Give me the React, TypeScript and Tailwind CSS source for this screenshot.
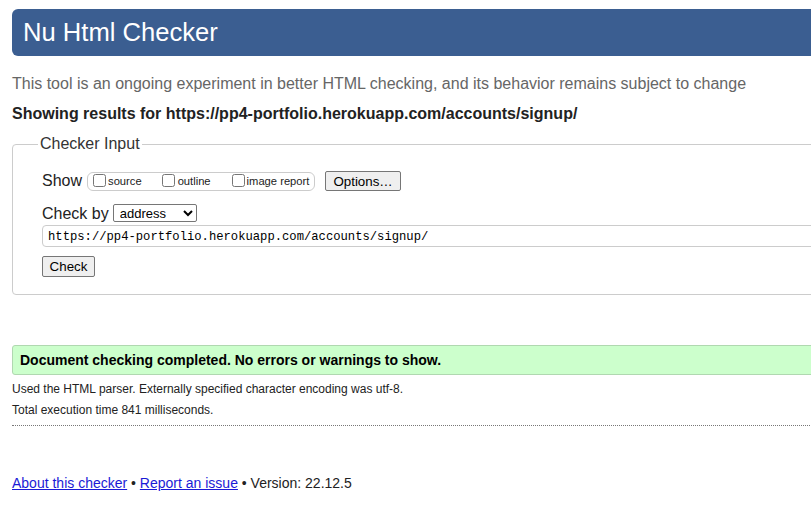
import React from "react";

const App = () => {
  return (
    <div className="w-[811px] h-[514px] overflow-hidden bg-white font-['Liberation_Sans',Arial,sans-serif] text-[#222]">
      <div className="w-[900px] pl-3 pt-[9px]">
        <h1 className="h-[47px] flex items-center pl-[11px] bg-[#3b5e91] text-white text-[25.6px] rounded-l-[6px]">
          Nu Html Checker
        </h1>

        <p className="mt-[19px] text-base leading-[18px] text-[#666]">
          This tool is an ongoing experiment in better HTML checking, and its behavior remains subject to change
        </p>
        <p className="mt-3 text-base leading-[18px] font-bold text-[#222]">
          Showing results for https://pp4-portfolio.herokuapp.com/accounts/signup/
        </p>

        <fieldset className="mt-3 border border-[#ccc] rounded-[4px] pl-[29px] pb-[16px]">
          <legend className="-ml-[4px] px-[2px] text-base leading-[18px] text-[#333]">
            Checker Input
          </legend>

          <div className="mt-[18px] flex items-center h-5">
            <span className="text-base">Show</span>
            <div className="ml-[5px] h-[19px] flex items-center border border-[#ccc] rounded-[6px] pl-[2px] pr-[5px] text-[11.2px] text-[#222]">
              <label className="flex items-center">
                <input type="checkbox" className="m-0 ml-[3px] mr-[2px] w-[13px] h-[13px]" />
                source
              </label>
              <label className="flex items-center ml-[20px]">
                <input type="checkbox" className="m-0 mr-[3px] w-[13px] h-[13px]" />
                outline
              </label>
              <label className="flex items-center ml-[21px]">
                <input type="checkbox" className="m-0 mr-[2px] w-[13px] h-[13px]" />
                image report
              </label>
            </div>
            <button className="ml-[10px] h-5 px-[7px] text-[13.33px] bg-[#efefef] border border-[#767676] rounded-[2px] text-black">
              Options…
            </button>
          </div>

          <div className="mt-[13px] flex items-center h-[18px]">
            <span className="text-base leading-[18px] pt-[1px]">Check by</span>
            <select className="ml-[4px] w-[84px] h-[18px] text-[13px] border border-[#767676] rounded-[2px] pl-[2px] text-black bg-white">
              <option>address</option>
            </select>
          </div>

          <div className="mt-[3px] h-[22px] flex items-center pt-[2px] border border-[#ccc] rounded-[4px] pl-[5px] font-['Liberation_Mono',monospace] text-[12.2px] text-black">
            https://pp4-portfolio.herokuapp.com/accounts/signup/
          </div>

          <button className="mt-[9px] h-[21px] w-[53px] text-[13.33px] bg-[#efefef] border border-[#767676] rounded-[2px] text-black">
            Check
          </button>
        </fieldset>

        <div className="mt-[50px] h-[30px] flex items-center pl-[7px] bg-[#ccffcc] border border-[#b0d8b0] rounded-[3px] font-bold text-[14px] text-black">
          Document checking completed. No errors or warnings to show.
        </div>

        <p className="mt-[4px] text-[12px] leading-[21px] text-[#222]">
          Used the HTML parser. Externally specified character encoding was utf-8.
        </p>
        <p className="text-[12px] leading-[21px] text-[#222]">
          Total execution time 841 milliseconds.
        </p>
        <hr className="mt-[4px] border-0 border-t border-dotted border-[#777]" />

        <p className="mt-[49px] text-[14px] leading-4 text-[#222]">
          <a href="#" className="text-[#1a1ad6] underline">About this checker</a> •{" "}
          <a href="#" className="text-[#1a1ad6] underline">Report an issue</a> • Version: 22.12.5
        </p>
      </div>
    </div>
  );
};

export default App;
